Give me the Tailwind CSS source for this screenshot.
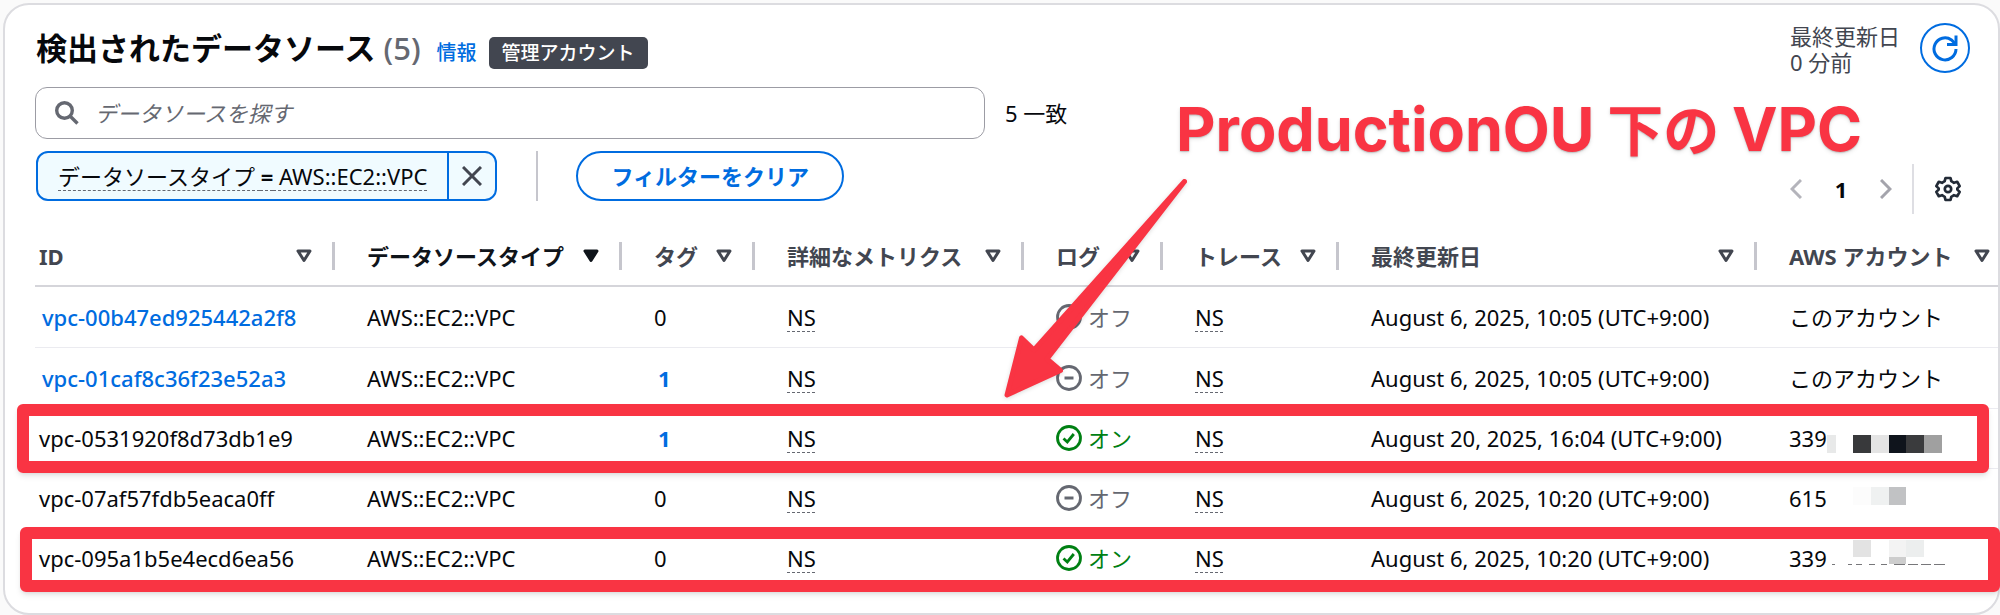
<!DOCTYPE html>
<html lang="ja">
<head>
    <meta charset="UTF-8">
    <meta name="viewport" content="width=device-width, initial-scale=1.0">
    <title>検出されたデータソース</title>
    <script src="https://cdn.jsdelivr.net/npm/@tailwindcss/browser@4"></script>
</head>
<body class="relative min-h-screen overflow-hidden bg-[#fafafa] pt-[3px] pl-[3px] font-['Noto_Sans','Noto_Sans_CJK_JP',sans-serif] text-[22px] leading-7 text-[#06080c]">
    <!-- icons -->
    <svg class="hidden">
        <symbol id="sort" viewBox="0 0 16 14"><path d="M2 2h12L8 11.5z" stroke="currentColor" stroke-width="3" stroke-linejoin="round"/></symbol>
        <symbol id="off" viewBox="0 0 26 26"><circle cx="13" cy="13" r="11.5" fill="none" stroke="currentColor" stroke-width="2.8"/><path d="M8.5 13h9" stroke="currentColor" stroke-width="3"/></symbol>
        <symbol id="on" viewBox="0 0 26 26"><circle cx="13" cy="13" r="11.5" fill="none" stroke="currentColor" stroke-width="2.8"/><path d="M7.5 13.5l3.8 3.5 6.5-8" fill="none" stroke="currentColor" stroke-width="2.8"/></symbol>
    </svg>

    <main class="min-h-[612px] overflow-hidden rounded-[26px] border-2 border-[#dcdce0] bg-white">
        <header class="flex items-start justify-between pt-[18px] pr-7 pl-[31px]">
            <div class="flex items-end pt-1">
                <h1 class="text-[31px] leading-[42px] font-bold">検出されたデータソース <span class="font-medium text-[#656871]">(5)</span></h1>
                <a href="#" class="ml-4 text-[20px] leading-8 font-medium text-[#006ce0]">情報</a>
                <span class="ml-3 h-8 rounded-[5px] bg-[#424650] px-[13px] text-[19px] leading-8 font-medium text-white">管理アカウント</span>
            </div>
            <div class="flex gap-5">
                <p class="leading-[26px] text-[#424650]">最終更新日<br>0 分前</p>
                <button aria-label="更新" class="flex size-[50px] items-center justify-center rounded-full border-2 border-[#006ce0] text-[#006ce0]">
                    <svg class="size-7" viewBox="0 0 28 28" fill="none" stroke="currentColor" stroke-width="3"><path d="M25 15a11 11 0 1 1-4.5-9l3.5 3.5"/><path d="M25 1.5v9h-9"/></svg>
                </button>
            </div>
        </header>

        <div class="mt-3 flex items-center gap-5 pl-[30px]">
            <label class="flex h-[52px] w-[950px] items-center gap-4 rounded-xl border border-[#9c9ca4] px-[19px]">
                <svg class="size-6 shrink-0" viewBox="0 0 24 24" fill="none" stroke="#656871" stroke-width="3.4"><circle cx="9.5" cy="9.5" r="7.8"/><path d="M15 15l7.5 7.5"/></svg>
                <input type="text" aria-label="検索" placeholder="データソースを探す" class="w-full italic outline-none placeholder:text-[#656871]">
            </label>
            <span>5 一致</span>
        </div>

        <div class="mt-3 flex justify-between pr-9 pl-[31px]">
            <div class="flex h-[50px] items-stretch">
                <div class="flex overflow-hidden rounded-xl border-2 border-[#006ce0] bg-[#f0fbff]">
                    <button class="px-5 underline decoration-[#656871] decoration-dashed decoration-1 underline-offset-[5px]">データソースタイプ <b>=</b> AWS::EC2::VPC</button>
                    <button aria-label="削除" class="flex w-12 items-center justify-center border-l-2 border-[#006ce0]">
                        <svg class="size-5" viewBox="0 0 20 20" stroke="#424650" stroke-width="3"><path d="M1 1l18 18M19 1L1 19"/></svg>
                    </button>
                </div>
                <span class="ml-[39px] w-[2px] bg-[#c6c6cd]"></span>
                <button class="ml-[38px] rounded-full border-2 border-[#006ce0] px-[33px] font-bold text-[#006ce0]">フィルターをクリア</button>
            </div>
            <nav class="mt-[13px] flex h-[50px] items-center">
                <button aria-label="前へ" class="px-1"><svg class="h-5 w-3" viewBox="0 0 12 20" fill="none" stroke="#b4b4bb" stroke-width="3"><path d="M11 1L2 10l9 9"/></svg></button>
                <button class="w-[70px] font-bold">1</button>
                <button aria-label="次へ" class="px-1"><svg class="h-5 w-3" viewBox="0 0 12 20" fill="none" stroke="#a4a4ac" stroke-width="3"><path d="M1 1l9 9-9 9"/></svg></button>
                <span class="ml-4 h-full w-[2px] bg-[#dedee3]"></span>
                <button aria-label="設定" class="ml-5"><svg class="size-7" viewBox="0 0 28 28" fill="none" stroke="#232b37" stroke-width="2.7" stroke-linejoin="round"><path d="M11.500 3h5l.8 3.200 2.700 1.600 3.200-1 2.500 4.300-2.400 2.300v1.200l2.400 2.300-2.500 4.300-3.200-1-2.700 1.600-.8 3.200h-5l-.8-3.200L8 20.200l-3.200 1-2.500-4.300 2.400-2.300v-1.200l-2.400-2.300 2.500-4.300 3.200 1 2.700-1.600z"/><circle cx="14" cy="14" r="3.200"/></svg></button>
            </nav>
        </div>

        <div class="mt-3 pl-[30px]">
            <table class="w-full table-fixed text-left">
                <colgroup>
                    <col class="w-[300px]"><col class="w-[287px]"><col class="w-[133px]"><col class="w-[269px]"><col class="w-[139px]"><col class="w-[176px]"><col class="w-[418px]"><col>
                </colgroup>
                <thead class="text-[#424650]">
                    <tr class="h-[60px] border-b-2 border-[#d5d5da]">
                        <th class="pl-1"><div class="flex h-7 items-center justify-between border-r-[3px] border-[#c6c6cd] pr-5">ID<svg class="h-[14px] w-4" fill="none"><use href="#sort"/></svg></div></th>
                        <th class="pl-8 text-[#0f141a]"><div class="flex h-7 items-center justify-between border-r-[3px] border-[#c6c6cd] pr-5">データソースタイプ<svg class="h-[14px] w-4" fill="currentColor"><use href="#sort"/></svg></div></th>
                        <th class="pl-8"><div class="flex h-7 items-center justify-between border-r-[3px] border-[#c6c6cd] pr-5">タグ<svg class="h-[14px] w-4" fill="none"><use href="#sort"/></svg></div></th>
                        <th class="pl-8"><div class="flex h-7 items-center justify-between border-r-[3px] border-[#c6c6cd] pr-5">詳細なメトリクス<svg class="h-[14px] w-4" fill="none"><use href="#sort"/></svg></div></th>
                        <th class="pl-8"><div class="flex h-7 items-center justify-between border-r-[3px] border-[#c6c6cd] pr-5">ログ<svg class="h-[14px] w-4" fill="none"><use href="#sort"/></svg></div></th>
                        <th class="pl-8"><div class="flex h-7 items-center justify-between border-r-[3px] border-[#c6c6cd] pr-5">トレース<svg class="h-[14px] w-4" fill="none"><use href="#sort"/></svg></div></th>
                        <th class="pl-8"><div class="flex h-7 items-center justify-between border-r-[3px] border-[#c6c6cd] pr-5">最終更新日<svg class="h-[14px] w-4" fill="none"><use href="#sort"/></svg></div></th>
                        <th class="pr-2 pl-8"><div class="flex h-7 items-center justify-between whitespace-nowrap">AWS アカウント<svg class="h-[14px] w-4" fill="none"><use href="#sort"/></svg></div></th>
                    </tr>
                </thead>
                <tbody>
                    <tr class="h-[61px] border-b border-[#ebebf0]">
                        <td class="pl-[7px]"><a href="#" class="font-medium text-[#006ce0]">vpc-00b47ed925442a2f8</a></td>
                        <td class="pl-8">AWS::EC2::VPC</td>
                        <td class="pl-8">0</td>
                        <td class="pl-8"><span class="underline decoration-[#656871] decoration-dashed decoration-1 underline-offset-[5px]">NS</span></td>
                        <td class="pl-8"><div class="flex items-center gap-[6px] text-[#656871]"><svg class="size-[26px]"><use href="#off"/></svg>オフ</div></td>
                        <td class="pl-8"><span class="underline decoration-[#656871] decoration-dashed decoration-1 underline-offset-[5px]">NS</span></td>
                        <td class="pl-8">August 6, 2025, 10:05 (UTC+9:00)</td>
                        <td class="pl-8">このアカウント</td>
                    </tr>
                    <tr class="h-[61px] border-b border-[#ebebf0]">
                        <td class="pl-[7px]"><a href="#" class="font-medium text-[#006ce0]">vpc-01caf8c36f23e52a3</a></td>
                        <td class="pl-8">AWS::EC2::VPC</td>
                        <td class="pl-9"><a href="#" class="font-bold text-[#006ce0]">1</a></td>
                        <td class="pl-8"><span class="underline decoration-[#656871] decoration-dashed decoration-1 underline-offset-[5px]">NS</span></td>
                        <td class="pl-8"><div class="flex items-center gap-[6px] text-[#656871]"><svg class="size-[26px]"><use href="#off"/></svg>オフ</div></td>
                        <td class="pl-8"><span class="underline decoration-[#656871] decoration-dashed decoration-1 underline-offset-[5px]">NS</span></td>
                        <td class="pl-8">August 6, 2025, 10:05 (UTC+9:00)</td>
                        <td class="pl-8">このアカウント</td>
                    </tr>
                    <tr class="h-[60px] border-b border-[#ebebf0]">
                        <td class="pl-1">vpc-0531920f8d73db1e9</td>
                        <td class="pl-8">AWS::EC2::VPC</td>
                        <td class="pl-9"><a href="#" class="font-bold text-[#006ce0]">1</a></td>
                        <td class="pl-8"><span class="underline decoration-[#656871] decoration-dashed decoration-1 underline-offset-[5px]">NS</span></td>
                        <td class="pl-8"><div class="flex items-center gap-[6px] text-[#008013]"><svg class="size-[26px]"><use href="#on"/></svg>オン</div></td>
                        <td class="pl-8"><span class="underline decoration-[#656871] decoration-dashed decoration-1 underline-offset-[5px]">NS</span></td>
                        <td class="pl-8">August 20, 2025, 16:04 (UTC+9:00)</td>
                        <td class="pl-8"><div class="flex items-center">339<svg class="h-10 w-[120px]"><path fill="#e8e9e9" d="M0 17h9v18H0z"/><path fill="#38393b" d="M26 17h18v18H26z"/><path fill="#e4e4e4" d="M44 17h18v18H44z"/><path fill="#0f141c" d="M62 17h17v18H62z"/><path fill="#3a3b3d" d="M79 17h18v18H79z"/><path fill="#a0a0a0" d="M97 17h18v18H97z"/></svg></div></td>
                    </tr>
                    <tr class="h-[60px] border-b border-[#ebebf0]">
                        <td class="pl-1">vpc-07af57fdb5eaca0ff</td>
                        <td class="pl-8">AWS::EC2::VPC</td>
                        <td class="pl-8">0</td>
                        <td class="pl-8"><span class="underline decoration-[#656871] decoration-dashed decoration-1 underline-offset-[5px]">NS</span></td>
                        <td class="pl-8"><div class="flex items-center gap-[6px] text-[#656871]"><svg class="size-[26px]"><use href="#off"/></svg>オフ</div></td>
                        <td class="pl-8"><span class="underline decoration-[#656871] decoration-dashed decoration-1 underline-offset-[5px]">NS</span></td>
                        <td class="pl-8">August 6, 2025, 10:20 (UTC+9:00)</td>
                        <td class="pl-8"><div class="flex items-center">615<svg class="h-10 w-[120px]"><path fill="#fcfcfc" d="M26 9h18v18H26z"/><path fill="#eff1f1" d="M44 9h18v18H44z"/><path fill="#c1c2c4" d="M62 9h17v18H62z"/></svg></div></td>
                    </tr>
                    <tr class="h-[60px]">
                        <td class="pl-1">vpc-095a1b5e4ecd6ea56</td>
                        <td class="pl-8">AWS::EC2::VPC</td>
                        <td class="pl-8">0</td>
                        <td class="pl-8"><span class="underline decoration-[#656871] decoration-dashed decoration-1 underline-offset-[5px]">NS</span></td>
                        <td class="pl-8"><div class="flex items-center gap-[6px] text-[#008013]"><svg class="size-[26px]"><use href="#on"/></svg>オン</div></td>
                        <td class="pl-8"><span class="underline decoration-[#656871] decoration-dashed decoration-1 underline-offset-[5px]">NS</span></td>
                        <td class="pl-8">August 6, 2025, 10:20 (UTC+9:00)</td>
                        <td class="pl-8"><div class="flex items-center">339<svg class="h-10 w-[120px]"><path fill="#e3e3e3" d="M26 2h18v17H26z"/><path fill="#f3f3f3" d="M62 2h17v17H62z"/><path fill="#eceeee" d="M79 2h18v17H79z"/><path fill="#cdcdcd" d="M62 19h17v7H62z"/><path stroke="#77777a" stroke-width="1" d="M5 26.5h3M21 26.5h4M29 26.5h6M42 26.5h6M54 26.5h6M67 26.5h11M81 26.5h10M94 26.5h10M107 26.5h11"/></svg></div></td>
                    </tr>
                </tbody>
            </table>
        </div>
    </main>

    <!-- callouts laid over the table -->
    <div class="absolute top-[404px] right-[11px] left-[17px] h-[69px] rounded-md border-[12px] border-[#f93443] shadow-md"></div>
    <div class="absolute top-[527px] right-0 left-5 h-[65px] rounded-md border-[12px] border-[#f93443] shadow-md"></div>
    <svg class="absolute top-[170px] left-[1000px] h-[240px] w-[200px] drop-shadow-sm" viewBox="1000 170 200 240"><path d="M1184.5 181.5L1034 350 1021.5 338 1007 395 1060.5 370.5 1047 359z" fill="#f93443" stroke="#f93443" stroke-width="5" stroke-linejoin="round"/></svg>
    <p class="absolute top-[89px] left-[1176px] font-['Inter','Noto_Sans_CJK_JP',sans-serif] text-[61px] leading-[76px] font-bold whitespace-nowrap text-[#f93443] text-shadow-md">ProductionOU<span class="font-['Noto_Sans_CJK_JP'] text-[56px]"> 下の </span>VPC</p>
</body>
</html>
